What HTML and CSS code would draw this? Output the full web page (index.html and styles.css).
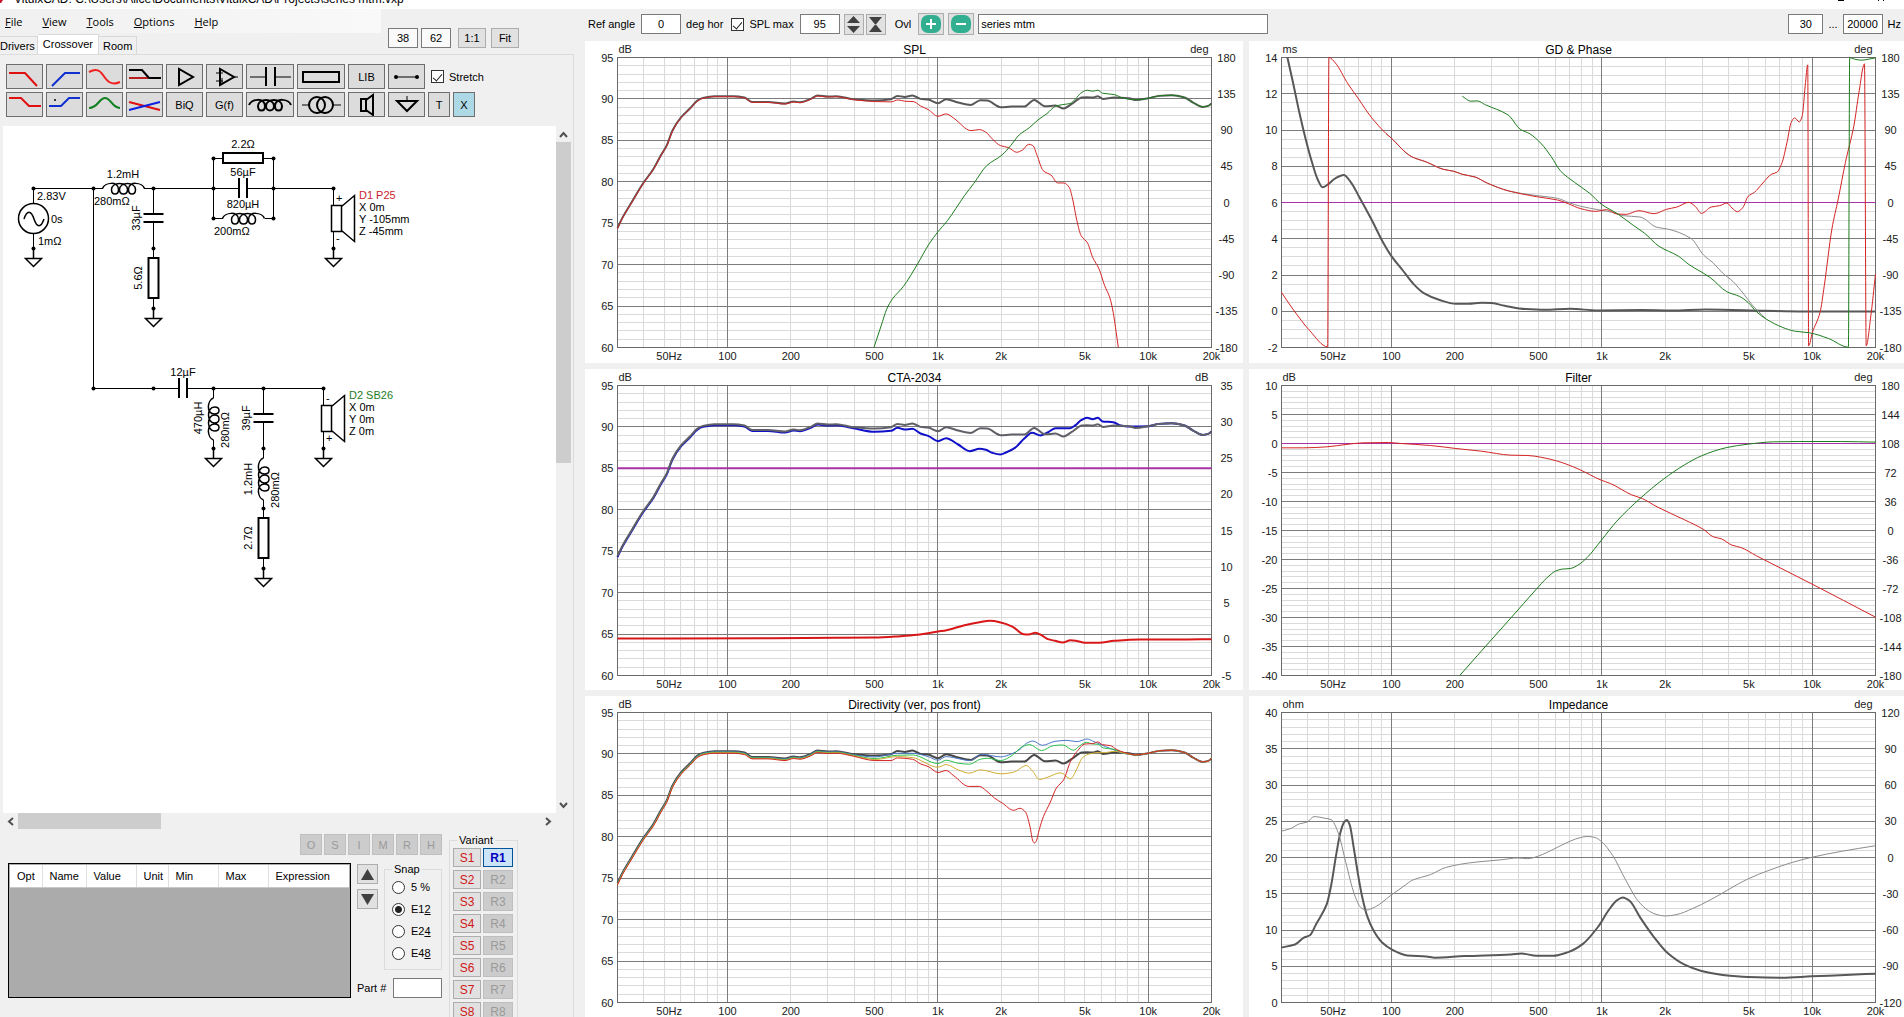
FILE: index.html
```html
<!DOCTYPE html>
<html lang="en">
<head>
  <meta charset="UTF-8" />
  <meta name="viewport" content="width=device-width, initial-scale=1.0" />
  <title>VituixCAD</title>
  <link rel="stylesheet" href="styles.css">
</head>
<body>
  <header class="titlebar">
    <svg class="app-icon" width="4" height="9"><path d="M0 0h3l-2 3H0z" fill="#c8102e"/></svg>
    <span class="title-text">VituixCAD: C:\Users\Alice\Documents\VituixCAD\Projects\series mtm.vxp</span>
    <svg class="window-marks" width="70" height="9"><path d="M4 .5h6M44.5 0v1M49.5 0v1" stroke="#000"/></svg>
  </header>

  <main class="app">
    <section class="left">
      <div class="head">
        <div class="head-nav">
          <nav class="menu">
            <a href="#"><u>F</u>ile</a>
            <a href="#"><u>V</u>iew</a>
            <a href="#"><u>T</u>ools</a>
            <a href="#"><u>O</u>ptions</a>
            <a href="#"><u>H</u>elp</a>
          </nav>
          <div class="tabs" role="tablist">
            <button class="tab first" role="tab">Drivers</button>
            <button class="tab active" role="tab" aria-selected="true">Crossover</button>
            <button class="tab" role="tab">Room</button>
          </div>
        </div>
        <div class="split">
          <input type="text" value="38" aria-label="Left width">
          <input type="text" value="62" aria-label="Right width">
          <div class="zoom">
            <button class="btn">1:1</button>
            <button class="btn">Fit</button>
          </div>
        </div>
      </div>

      <div class="page">
        <div class="toolbar">
          <div class="tool-row">
            <button class="tool" aria-label="Low pass"><svg width="35" height="23"><path d="M2 8h16l12 13" stroke="#e01010"/></svg></button>
            <button class="tool" aria-label="High pass"><svg width="35" height="23"><path d="M5 21L18 8h15" stroke="#1030d0"/></svg></button>
            <button class="tool" aria-label="All pass"><svg width="35" height="23"><path d="M2 7C8 4 12 4 16 10S24 21 33 17" stroke="#f02020"/></svg></button>
            <button class="tool" aria-label="Shelf"><svg width="35" height="23"><path d="M2 13h19" stroke="#b82020"/><path d="M2 5h13l7 8h12" stroke="#000"/></svg></button>
            <button class="tool" aria-label="Buffer"><svg width="35" height="23"><path d="M12 4v16l14-8z" stroke="#000"/></svg></button>
            <button class="tool" aria-label="Op amp"><svg width="35" height="23"><path d="M13 4v16l14-8z" stroke="#000"/><path d="M9 8h7M9 16h7M15 13v6M27 12h4" stroke="#000" stroke-width="1"/></svg></button>
            <button class="tool wide" aria-label="Capacitor"><svg width="46" height="23"><path d="M3 12h17M28 12h16" stroke="#000" stroke-width="1"/><path d="M19 2v19M28 2v19" stroke="#000"/></svg></button>
            <button class="tool wide" aria-label="Resistor"><svg width="46" height="23"><path d="M5 7h36v10H5z" stroke="#000"/></svg></button>
            <button class="tool">LIB</button>
            <button class="tool" aria-label="Wire"><svg width="35" height="23"><path d="M7 12h20" stroke="#000" stroke-width="1"/><circle cx="7" cy="12" r="2"/><circle cx="28" cy="12" r="2"/></svg></button>
            <label class="check stretch"><input type="checkbox" checked>Stretch</label>
          </div>
          <div class="tool-row">
            <button class="tool" aria-label="Low shelf"><svg width="35" height="23"><path d="M2 5h12l8 8h12" stroke="#e01010"/></svg></button>
            <button class="tool" aria-label="High shelf"><svg width="35" height="23"><path d="M2 13h12l8-8h11" stroke="#1030d0"/><circle cx="8" cy="7" r="1"/></svg></button>
            <button class="tool" aria-label="Peak"><svg width="35" height="23"><path d="M2 15C11 15 12 5 18 5S25 15 33 15" stroke="#108020"/></svg></button>
            <button class="tool" aria-label="Crossing"><svg width="35" height="23"><path d="M2 9l31 8" stroke="#e01010"/><path d="M2 17l31-8" stroke="#1020e0"/></svg></button>
            <button class="tool">BiQ</button>
            <button class="tool">G(f)</button>
            <button class="tool wide" aria-label="Inductor"><svg width="46" height="23"><use href="#coil" x="2" y="12"/></svg></button>
            <button class="tool wide" aria-label="Transformer"><svg width="46" height="23"><circle class="ring" cx="19" cy="12" r="8"/><circle class="ring" cx="27" cy="12" r="8"/><path d="M4 12h7M35 12h8" stroke="#000" stroke-width="1"/></svg></button>
            <button class="tool" aria-label="Driver"><svg width="35" height="23"><path d="M12 6h5v12h-5zM17 7l7-5v20l-7-5" stroke="#000"/></svg></button>
            <button class="tool" aria-label="Ground"><svg width="35" height="23"><path d="M18 3v5" stroke="#000" stroke-width="1"/><path d="M8 8h20l-10 10z" stroke="#000"/></svg></button>
            <button class="tool narrow">T</button>
            <button class="tool narrow on">X</button>
          </div>
        </div>

        <div class="canvas-box">
          <svg class="canvas">
            <defs>
              <path id="coil" d="M0 0C2-6 16-8 16 1C16 7 9 7 9 1C9-7 25-7 25 1C25 7 17 7 17 1C17-7 33-7 33 1C33 7 26 7 26 1C26-8 40-6 42 0"/>
              <path id="ground" d="M0 0v10M-8 10H8L0 18z"/>
              <g id="capacitor"><path d="M-4-10V10M4-10V10" stroke-width="2"/></g>
              <path id="resistor" d="M-20-5h40v10h-40z" stroke-width="2"/>
              <path id="speaker" d="M-2-13h10v26H-2zM8-12l13-11v46L8 12"/>
            </defs>
            <!-- shift the drawing grid so the sheet starts at its own corner -->
            <g transform="translate(-3 -126)">
              <g class="wires">
                <path d="M33.500 188.500H103M144 188.500H239M247 188.500H333.500V206M333.500 232V248.500M33.500 188.500V203M33.500 234V248.500"/>
                <path d="M93.500 188.500V388.500H179M187 388.500H323.500V406M323.500 432V448.500"/>
                <path d="M153.500 188.500V214M153.500 222V258M153.500 298V308.500"/>
                <path d="M213.500 218.500V158.500H223M263 158.500H273.500V218.500H265M213.500 218.500H223"/>
                <path d="M213.500 388.500V398M213.500 440V448.500M263.500 388.500V414M263.500 422V458M263.500 500V518M263.500 558V568.500"/>
              </g>
              <g class="parts">
                <circle cx="33.500" cy="218.500" r="15"/>
                <path d="M24 219c3-9 7-9 10 0s7 9 10 0"/>
                <use href="#coil" x="102.500" y="188.500"/>
                <use href="#coil" x="222.500" y="218.500"/>
                <use href="#coil" transform="translate(213.500 440) rotate(-90)"/>
                <use href="#coil" transform="translate(263.500 500) rotate(-90)"/>
                <use href="#capacitor" x="243" y="188"/>
                <use href="#capacitor" x="183" y="388"/>
                <use href="#capacitor" transform="translate(153.500 218) rotate(90)"/>
                <use href="#capacitor" transform="translate(263.500 418) rotate(90)"/>
                <use href="#resistor" x="243" y="158"/>
                <use href="#resistor" transform="translate(153.500 278) rotate(90)"/>
                <use href="#resistor" transform="translate(263.500 538) rotate(90)"/>
                <use href="#speaker" x="333.500" y="218.500"/>
                <use href="#speaker" x="323.500" y="418.500"/>
                <use href="#ground" x="33.500" y="248.500"/>
                <use href="#ground" x="333.500" y="248.500"/>
                <use href="#ground" x="153.500" y="308.500"/>
                <use href="#ground" x="213.500" y="448.500"/>
                <use href="#ground" x="323.500" y="448.500"/>
                <use href="#ground" x="263.500" y="568.500"/>
              </g>
              <g id="nodes"></g>
              <g class="labels">
                <text x="37" y="200">2.83V</text>
                <text x="51" y="223">0s</text>
                <text x="38" y="245">1mΩ</text>
                <text x="123" y="178" class="mid">1.2mH</text>
                <text x="94" y="205">280mΩ</text>
                <text x="243" y="148" class="mid">2.2Ω</text>
                <text x="243" y="176" class="mid">56µF</text>
                <text x="243" y="208" class="mid">820µH</text>
                <text x="214" y="235">200mΩ</text>
                <text x="183" y="376" class="mid">12µF</text>
                <text transform="translate(140 218) rotate(-90)" class="mid">33µF</text>
                <text transform="translate(142 278) rotate(-90)" class="mid">5.6Ω</text>
                <text transform="translate(202 418) rotate(-90)" class="mid">470µH</text>
                <text transform="translate(229 430) rotate(-90)" class="mid">280mΩ</text>
                <text transform="translate(250 418) rotate(-90)" class="mid">39µF</text>
                <text transform="translate(252 479) rotate(-90)" class="mid">1.2mH</text>
                <text transform="translate(279 490) rotate(-90)" class="mid">280mΩ</text>
                <text transform="translate(252 538) rotate(-90)" class="mid">2.7Ω</text>
                <text x="336" y="202">+</text>
                <text x="336" y="242">-</text>
                <text x="326" y="402">-</text>
                <text x="326" y="442">+</text>
                <text x="359" y="199" class="red">D1 P25</text>
                <text x="359" y="211">X 0m</text>
                <text x="359" y="223">Y -105mm</text>
                <text x="359" y="235">Z -45mm</text>
                <text x="349" y="399" class="green">D2 SB26</text>
                <text x="349" y="411">X 0m</text>
                <text x="349" y="423">Y 0m</text>
                <text x="349" y="435">Z 0m</text>
              </g>
            </g>
          </svg>
          <div class="scroll-v">
            <button aria-label="Scroll up"><svg width="9" height="7"><path d="M1 6l3.500-4L8 6"/></svg></button>
            <div class="thumb"></div>
            <button aria-label="Scroll down"><svg width="9" height="7"><path d="M1 1l3.500 4L8 1"/></svg></button>
          </div>
          <div class="scroll-h">
            <button aria-label="Scroll left"><svg width="7" height="9"><path d="M6 1L2 4.500 6 8"/></svg></button>
            <div class="thumb"></div>
            <button aria-label="Scroll right"><svg width="7" height="9"><path d="M1 1l4 3.500L1 8"/></svg></button>
          </div>
        </div>

        <div class="bottom">
          <div class="params">
            <div class="flags">
              <button disabled>O</button>
              <button disabled>S</button>
              <button disabled>I</button>
              <button disabled>M</button>
              <button disabled>R</button>
              <button disabled>H</button>
            </div>
            <div class="grid-box">
              <table class="grid">
                <thead>
                  <tr>
                    <th class="c-opt">Opt</th>
                    <th class="c-name">Name</th>
                    <th class="c-value">Value</th>
                    <th class="c-unit">Unit</th>
                    <th class="c-min">Min</th>
                    <th class="c-max">Max</th>
                    <th>Expression</th>
                  </tr>
                </thead>
              </table>
            </div>
            <div class="arrows">
              <button aria-label="Increase"><svg width="13" height="11"><path d="M6.500 0L13 11H0z"/></svg></button>
              <button aria-label="Decrease"><svg width="13" height="11"><path d="M6.500 11L13 0H0z"/></svg></button>
            </div>
            <fieldset class="snap">
              <legend>Snap</legend>
              <label><input type="radio" name="snap">5 %</label>
              <label><input type="radio" name="snap" checked><span>E1<u>2</u></span></label>
              <label><input type="radio" name="snap"><span>E2<u>4</u></span></label>
              <label><input type="radio" name="snap"><span>E4<u>8</u></span></label>
            </fieldset>
            <div class="part">
              <label for="part">Part #</label>
              <input type="text" id="part">
            </div>
          </div>
          <fieldset class="variant">
            <legend>Variant</legend>
            <button>S1</button><button class="recall">R1</button>
            <button>S2</button><button disabled>R2</button>
            <button>S3</button><button disabled>R3</button>
            <button>S4</button><button disabled>R4</button>
            <button>S5</button><button disabled>R5</button>
            <button>S6</button><button disabled>R6</button>
            <button>S7</button><button disabled>R7</button>
            <button>S8</button><button disabled>R8</button>
          </fieldset>
        </div>
      </div>
    </section>

    <section class="right">
      <div class="options">
        <label for="angle">Ref angle</label>
        <input type="text" id="angle" class="num" value="0">
        <span class="unit">deg hor</span>
        <label class="check"><input type="checkbox" checked>SPL max</label>
        <input type="text" class="num max" value="95" aria-label="SPL max">
        <button class="btn spin" aria-label="Move range"><svg width="15" height="19"><path d="M7.500 1L14 8H1zM7.500 18L14 11H1z"/></svg></button>
        <button class="btn spin" aria-label="Scale range"><svg width="15" height="19"><path d="M7.500 10L14 2H1zM7.500 9L14 17H1z"/></svg></button>
        <span class="ovl">Ovl</span>
        <button class="btn round" aria-label="Add overlay"><svg width="20" height="18"><rect width="20" height="18" rx="7" fill="#32ae91"/><path d="M10 4v10M5 9h10" stroke="#fff" stroke-width="2"/></svg></button>
        <button class="btn round" aria-label="Remove overlay"><svg width="20" height="18"><rect width="20" height="18" rx="7" fill="#32ae91"/><path d="M5 9h10" stroke="#fff" stroke-width="2"/></svg></button>
        <input type="text" class="ovl-name" value="series mtm" aria-label="Overlay name">
        <div class="range">
          <input type="text" class="low" value="30" aria-label="Lowest frequency">
          <span>...</span>
          <input type="text" class="high" value="20000" aria-label="Highest frequency">
          <span>Hz</span>
        </div>
      </div>
      <div class="charts">
        <svg class="chart" id="spl"></svg>
        <svg class="chart" id="phase"></svg>
        <svg class="chart" id="cta"></svg>
        <svg class="chart" id="filter"></svg>
        <svg class="chart" id="directivity"></svg>
        <svg class="chart" id="impedance"></svg>
      </div>
    </section>
  </main>

  <script src="charts.js"></script>
</body>
</html>
```
FILE: styles.css
```css
* {
  box-sizing: border-box;
}
body {
  margin: 0;
  height: 100vh;
  display: flex;
  flex-direction: column;
  overflow: hidden;
  background: #f0f0f0;
  color: #000;
  font-family: "Liberation Sans", Arial, sans-serif;
  font-size: 11px;
}
button, input {
  font: inherit;
  margin: 0;
}
button {
  display: flex;
  align-items: center;
  justify-content: center;
  padding: 0;
  background: #e1e1e1;
  border: 1px solid #adadad;
  color: #000;
}
button:disabled {
  background: #cccccc;
  border-color: #bfbfbf;
  color: #9a9a9a;
}
input[type="text"] {
  height: 20px;
  padding: 0 2px;
  border: 1px solid #7a7a7a;
  background: #fff;
}
svg {
  display: block;
  fill: none;
}

/* title bar */
.titlebar {
  height: 9px;
  flex: none;
  display: flex;
  align-items: flex-end;
  background: #fff;
  overflow: hidden;
}
.title-text {
  margin-left: 10px;
  padding-bottom: 3px;
  font-size: 12px;
  line-height: 14px;
}
.window-marks {
  margin-left: auto;
}

.app {
  flex: 1;
  min-height: 0;
  display: flex;
}
.left {
  flex: 0 0 574px;
  display: flex;
  flex-direction: column;
}
.right {
  flex: 1;
  min-width: 0;
  display: flex;
  flex-direction: column;
  padding-left: 11px;
}

/* menu and tabs */
.head {
  height: 45px;
  display: flex;
}
.head-nav {
  width: 381px;
}
.menu {
  height: 24px;
  display: flex;
  align-items: center;
  gap: 20px;
  padding-left: 5px;
  background: linear-gradient(to right, #f0f0f0, #f9f9f9);
  font-family: "Open Sans", sans-serif;
  font-size: 11px;
}
.menu a {
  color: #000;
  text-decoration: none;
}
.tabs {
  height: 22px;
  display: flex;
  align-items: flex-end;
}
.tab {
  height: 19px;
  padding: 0 4px;
  background: #f0f0f0;
  border: 1px solid #d9d9d9;
  border-left: none;
}
.tab.first {
  padding: 0 2px 0 0;
}
.tab.active {
  height: 21px;
  padding: 0 5px 2px;
  background: #fff;
  border-bottom: none;
}
.split {
  display: flex;
  align-items: flex-start;
  padding: 19px 0 0 7px;
  gap: 3px;
}
.split input {
  width: 30px;
  text-align: center;
  background: #fafafa;
}
.zoom {
  display: flex;
  gap: 5px;
  margin-left: 4px;
}
.zoom .btn {
  width: 28px;
  height: 20px;
}

/* tab page */
.page {
  flex: 1;
  min-height: 0;
  display: flex;
  flex-direction: column;
  border-top: 1px solid #dcdcdc;
  border-right: 1px solid #dcdcdc;
}
.toolbar {
  display: flex;
  flex-direction: column;
  gap: 3px;
  padding: 9px 6px;
}
.tool-row {
  display: flex;
  gap: 3px;
}
.tool {
  width: 37px;
  height: 25px;
  background: #dcdcdc;
  border-color: #6e6e6e;
}
.tool.wide {
  width: 48px;
}
.tool.narrow {
  width: 22px;
}
.tool.on {
  background: #add8e6;
}
.tool svg {
  stroke-width: 2;
}
.tool circle {
  fill: #000;
}
.tool use {
  stroke: #000;
}
.tool .ring {
  fill: none;
  stroke: #000;
}
.check {
  display: flex;
  align-items: center;
  gap: 5px;
}
.stretch {
  margin-left: 3px;
}
input[type="checkbox"] {
  appearance: none;
  width: 13px;
  height: 13px;
  border: 1px solid #333;
  background: #fff;
  display: flex;
  align-items: center;
  justify-content: center;
}
input[type="checkbox"]:checked::after {
  content: "";
  width: 4px;
  height: 8px;
  border: solid #222;
  border-width: 0 1px 1px 0;
  transform: rotate(40deg);
}

/* schematic */
.canvas-box {
  flex: 1;
  min-height: 0;
  display: grid;
  grid-template-columns: 1fr 15px;
  grid-template-rows: 1fr 16px;
  padding: 0 2px 0 3px;
}
.canvas {
  width: 100%;
  height: 100%;
  background: #fff;
}
.wires path {
  stroke: #000;
}
.parts {
  stroke: #000;
  stroke-width: 1.5;
}
#nodes {
  fill: #000;
}
.labels {
  fill: #000;
}
.labels .mid, .chart .mid {
  text-anchor: middle;
}
.labels .red {
  fill: #c81e2d;
}
.labels .green {
  fill: #1e7b1e;
}
.scroll-v, .scroll-h {
  display: flex;
}
.scroll-v {
  flex-direction: column;
}
.scroll-v button, .scroll-h button {
  width: 15px;
  height: 16px;
  border: none;
  background: #f0f0f0;
}
.canvas-box button path {
  stroke: #505050;
  stroke-width: 2;
}
.thumb {
  background: #cdcdcd;
}
.scroll-v .thumb {
  height: 321px;
  margin-bottom: auto;
}
.scroll-h .thumb {
  width: 143px;
  margin-right: auto;
}

/* bottom controls */
.bottom {
  flex: 0 0 188px;
  display: flex;
  align-items: flex-start;
  gap: 7px;
  padding: 5px 0 0 8px;
  overflow: hidden;
}
.params {
  display: grid;
  grid-template-columns: 343px 21px 58px;
  column-gap: 6px;
}
.flags {
  grid-column: 1 / 4;
  display: flex;
  justify-content: flex-end;
  gap: 2px;
  padding-bottom: 8px;
}
.flags button {
  width: 22px;
  height: 21px;
}
.grid-box {
  grid-row: 2 / 4;
  height: 135px;
  border: 1px solid #000;
  padding: 1px;
  background: #ababab;
}
.grid {
  width: 100%;
  table-layout: fixed;
  border-collapse: collapse;
}
.grid th {
  height: 22px;
  padding: 0 0 0 7px;
  background: #fff;
  border-right: 1px solid #e0e0e0;
  border-bottom: 1px solid #c8c8c8;
  font-weight: normal;
  text-align: left;
  white-space: nowrap;
}
.grid th:last-child {
  border-right: none;
}
.c-opt {
  width: 32px;
}
.c-name {
  width: 44px;
}
.c-value, .c-min, .c-max {
  width: 50px;
}
.c-unit {
  width: 32px;
}
.arrows {
  display: flex;
  flex-direction: column;
  gap: 5px;
  padding-top: 1px;
}
.arrows button {
  width: 21px;
  height: 20px;
}
.arrows path, .spin path {
  fill: #404040;
}
fieldset {
  margin: 0;
  border: 1px solid #dcdcdc;
}
legend {
  padding: 0 2px;
  line-height: 13px;
}
.snap {
  height: 107px;
  padding: 0 0 0 7px;
}
.snap label {
  height: 22px;
  display: flex;
  align-items: center;
  gap: 6px;
}
input[type="radio"] {
  appearance: none;
  width: 13px;
  height: 13px;
  border: 1px solid #333;
  border-radius: 50%;
  background: #fff;
}
input[type="radio"]:checked {
  background: radial-gradient(#222 0 3px, #fff 4px);
}
.part {
  grid-column: 2 / 4;
  display: flex;
  align-items: center;
  justify-content: space-between;
  padding-top: 7px;
}
.part input {
  width: 49px;
}
.variant {
  display: grid;
  grid-template-columns: 28px 30px;
  gap: 3px 2px;
  padding: 1px 4px 8px 3px;
}
.variant legend {
  margin-left: 4px;
}
.variant button {
  height: 19px;
  font-size: 12px;
  color: #d01818;
}
.variant button:disabled {
  color: #9a9a9a;
}
.variant .recall {
  background: #cce4f7;
  border-color: #005499;
  color: #0000c0;
  font-weight: bold;
}

/* options above the charts */
.options {
  height: 32px;
  display: flex;
  align-items: center;
  padding: 0 0 2px 3px;
}
.num {
  width: 40px;
  text-align: center;
}
#angle {
  margin: 0 5px 0 6px;
}
.options .check {
  margin-left: 8px;
}
.max {
  margin: 0 4px 0 6px;
}
.spin {
  width: 20px;
  height: 21px;
  margin-right: 2px;
}
.ovl {
  margin: 0 7px;
}
.round {
  width: 26px;
  height: 22px;
  margin-right: 4px;
}
.ovl-name {
  width: 290px;
}
.range {
  display: flex;
  align-items: center;
  gap: 5px;
  margin-left: auto;
  padding-right: 3px;
}
.range input {
  text-align: center;
}
.low {
  width: 35px;
}
.high {
  width: 40px;
}

/* charts */
.charts {
  flex: 1;
  min-height: 0;
  display: grid;
  grid-template-columns: 1fr 1fr;
  grid-template-rows: repeat(3, 1fr);
  gap: 6px;
  margin: 0 -3px -1px 0;
}
.chart {
  width: 100%;
  height: 100%;
  background: #fff;
}
.chart text {
  fill: #202020;
}
.chart .title {
  font-size: 12px;
  fill: #000;
}
.chart .end {
  text-anchor: end;
}
.chart line, .chart rect {
  shape-rendering: crispEdges;
}
.minor {
  stroke: #dadada;
}
.major {
  stroke: #7c7c7c;
}
.frame {
  stroke: #6a6a6a;
}
```
FILE: charts.js
```js
const svgNS = 'http://www.w3.org/2000/svg';

// connection dots of the schematic
const nodes = [
  [33.5, 188.5], [33.5, 248.5], [93.5, 188.5], [153.5, 188.5], [153.5, 248.5], [153.5, 308.5],
  [213.5, 158.5], [273.5, 158.5], [213.5, 188.5], [273.5, 188.5], [213.5, 218.5], [273.5, 218.5],
  [333.5, 188.5], [333.5, 248.5], [93.5, 388.5], [153.5, 388.5], [213.5, 388.5], [263.5, 388.5],
  [323.5, 388.5], [213.5, 448.5], [263.5, 448.5], [323.5, 448.5], [263.5, 508.5], [263.5, 568.5]
];
nodes.forEach(([cx, cy]) => add(document.getElementById('nodes'), 'circle', { cx, cy, r: 2 }));

function add(parent, name, attrs, text) {
  const el = document.createElementNS(svgNS, name);
  for (const key in attrs) el.setAttribute(key, attrs[key]);
  if (text !== undefined) el.textContent = text;
  parent.appendChild(el);
  return el;
}

// "x,y x,y ..." in the given box -> points from 0 to 1 on both axes
function trace(box, str) {
  return str.trim().split(/\s+/).map((p) => {
    const [x, y] = p.split(',').map(Number);
    return [(x - box[0]) / (box[2] - box[0]), (y - box[1]) / (box[3] - box[1])];
  });
}

const splBox = [88, 176, 1478, 1045];
const ctaBox = [88, 76, 1478, 946];
const dirBox = [88, 67, 1478, 942];
const phaseBox = [98, 176, 1501, 1045];
const filterBox = [98, 76, 1501, 946];
const impBox = [98, 67, 1501, 942];

const onAxis = trace(splBox, `88,687 100,655 120,612 148,553 172,510 190,468 203,440 217,394 237,355
  258,328 275,305 288,297 315,292 360,292 385,296 403,309 440,309 480,314 500,308 515,310 540,300
  556,290 580,293 600,292 640,301 690,305 728,301 743,291 760,294 778,290 797,300 815,302 838,313
  857,301 885,311 915,318 937,304 953,305 985,325 1010,323 1040,323 1063,303 1088,322 1113,320
  1132,329 1150,316 1175,296 1188,295 1200,296 1212,292 1224,300 1250,296 1285,298 1300,303
  1330,298 1355,291 1385,289 1415,296 1435,311 1458,324 1470,321 1478,314`);

const lowEnd = (to, dy) => onAxis.filter((p) => p[0] < to).map((p) => [p[0], p[1] + dy / 290]);
const highEnd = onAxis.filter((p) => p[0] > 0.87);

const woofer = lowEnd(0.43, 0.5).concat(trace(splBox, `690,308 728,309 745,303 760,307 780,308 797,321
  815,332 838,352 857,345 875,358 915,395 935,392 950,400 965,420 984,440 1003,446 1022,460
  1036,453 1050,436 1060,440 1070,470 1084,515 1103,529 1118,552 1133,552 1145,565 1153,600
  1163,665 1173,710 1188,732 1200,775 1215,810 1228,860 1240,895 1248,940 1255,1000 1260,1045`));
const tweeter = trace(splBox, `688,1045 705,980 718,930 731,900 757,862 790,795 817,735 838,698
  860,665 900,590 922,553 952,500 988,468 1008,440 1028,408 1052,386 1072,363 1093,344 1113,322
  1130,317 1147,314 1160,300 1172,283 1187,274 1200,277 1212,274 1223,283 1250,287 1270,297`).concat(highEnd);

const listening = lowEnd(0.43, 1).concat(trace(ctaBox, `690,215 728,212 743,203 760,208 778,206
  797,220 815,227 838,243 857,234 885,253 912,273 935,266 950,269 965,278 984,283 997,277 1018,263
  1040,235 1058,218 1078,226 1097,215 1113,204 1147,204 1160,195 1173,180 1187,173 1200,177
  1212,173 1223,184 1248,186 1265,196 1283,199`), highEnd.slice(1));
const directivityIndex = trace(ctaBox, `88,835 450,834 600,833 690,832 750,828 790,824 838,814
  858,810 900,795 935,786 960,782 985,787 1013,800 1038,822 1050,823 1066,818 1080,825 1095,837
  1112,842 1130,847 1148,840 1165,843 1185,848 1215,848 1250,842 1310,838 1400,838 1478,837`);

const angle1 = lowEnd(0.43, 0.5).concat(trace(dirBox, `690,201 743,190 778,190 815,200 838,211 857,200
  885,206 912,212 940,193 985,201 1010,192 1030,178 1045,160 1060,153 1082,166 1112,154 1140,151
  1163,155 1187,147 1200,153 1212,160 1230,170 1250,180 1270,190`), highEnd);
const angle2 = lowEnd(0.43, 1).concat(trace(dirBox, `690,206 743,196 778,195 838,221 857,211 885,220
  912,223 937,208 955,205 985,212 1012,196 1035,170 1053,164 1080,182 1108,167 1130,165 1155,181
  1170,167 1185,157 1200,162 1212,163 1225,174 1250,178 1270,188`), highEnd);
const angle3 = lowEnd(0.43, 1.5).concat(trace(dirBox, `690,209 743,200 778,203 838,232 857,224 885,240
  912,250 937,240 985,252 1015,247 1045,227 1060,245 1075,269 1095,262 1125,249 1148,267 1163,237
  1175,205 1190,193 1212,188 1230,188 1250,184 1275,190`), highEnd);
const angle4 = lowEnd(0.43, 2).concat(trace(dirBox, `690,212 728,212 743,204 778,208 797,222 815,230
  838,248 857,242 875,258 910,290 935,290 950,302 970,325 988,340 1015,362 1030,356 1043,368
  1053,410 1060,455 1064,461 1068,455 1075,420 1085,380 1100,340 1115,295 1132,270 1148,215
  1163,185 1182,162 1200,161 1212,156 1223,164 1242,167 1255,178 1275,188`), highEnd);

const groupDelay = trace(phaseBox, `112,176 125,250 140,340 155,420 170,490 183,540 195,565 208,556
  225,538 245,528 262,550 280,590 310,660 340,735 356,768 385,815 410,855 435,883 470,902 510,914
  540,914 570,911 595,912 625,920 675,930 720,932 780,929 845,934 950,933 1020,934 1100,931
  1240,935 1320,937 1501,937`);
const phaseStart = '345,404 355,415 405,473 440,489 480,511 505,517 525,526 555,534 585,553 635,576 ';
const wooferPhase = trace(phaseBox, `98,880 125,930 165,995 207,1043 210,176 225,192 255,255 280,300
  310,355 ${phaseStart} 700,593 750,603 775,614 805,629 840,637 866,632 890,645 912,646 942,635
  978,644 1007,631 1032,624 1060,610 1075,622 1090,643 1113,624 1133,620 1150,612 1162,627
  1175,638 1188,625 1200,592 1215,580 1235,552 1255,526 1268,520 1280,492 1292,430 1302,370
  1310,357 1321,369 1328,350 1335,260 1341,198 1343,1040 1352,1000 1370,940 1380,860 1398,690
  1413,600 1430,490 1450,380 1462,280 1475,195 1479,1040 1490,950 1501,825`);
const totalPhase = trace(phaseBox, `${phaseStart} 690,588 750,598 775,610 805,622 850,633 880,640
  905,650 945,654 985,685 1010,690 1065,718 1095,768 1118,792 1140,822 1165,848 1190,885 1210,918
  1235,950 1243,960`);
const tweeterPhase = trace(phaseBox, `525,292 545,307 560,306 580,318 633,348 662,391 685,405
  712,435 735,473 757,516 790,550 825,582 855,617 890,643 930,680 955,702 990,742 1035,771
  1060,796 1110,835 1150,878 1180,892 1200,910 1220,938 1243,960 1282,985 1310,996 1345,1001
  1390,1018 1437,1044 1440,177 1455,182 1468,184 1485,181 1501,177`);

const lowPass = trace(filterBox, `98,263 150,263 205,260 250,253 290,248 350,247 380,250 450,256
  510,265 570,273 640,285 680,286 710,291 750,303 800,327 853,360 875,370 925,404 950,415 985,440
  1050,479 1095,508 1118,530 1137,536 1162,555 1183,562 1220,587 1350,671 1501,771`);
const highPass = trace(filterBox, `519,946 560,887 640,773 700,687 725,653 745,633 760,627 780,625
  798,615 820,592 853,541 890,483 945,415 1000,357 1050,314 1090,287 1150,262 1200,252 1260,245
  1320,244 1420,244 1501,246`);

const impedance = trace(impBox, `98,776 130,767 150,747 165,739 180,705 205,645 215,590 228,490
  237,430 245,400 252,391 259,405 268,470 278,550 288,620 300,680 315,724 335,760 360,783 395,800
  440,803 460,807 530,802 640,797 665,794 700,801 740,801 775,790 810,765 845,715 870,665 890,634
  904,625 920,635 945,685 975,740 1010,793 1050,828 1090,847 1140,859 1200,865 1280,867 1350,863
  1430,859 1501,855`);
const impedancePhase = trace(impBox, `98,425 120,417 140,403 158,398 175,381 200,386 215,390
  232,430 250,520 270,615 285,655 297,663 320,653 355,620 390,588 407,573 450,556 485,535 520,525
  560,518 620,511 655,506 680,508 705,500 740,480 780,455 805,444 820,441 838,444 855,458 880,498
  910,570 940,635 965,665 985,677 1005,681 1030,677 1070,658 1110,633 1200,569 1250,543 1300,521
  1350,504 1420,486 1501,469`);

const flat = (y) => [[0, y], [1, y]];
const gray = '#585858', thinGray = '#8c8c8c', red = '#d42424', green = '#1e7d1e', purple = '#a832a8';

const charts = [
  { id: 'spl', title: 'SPL', unit: 'dB', unit2: 'deg', left: [95, 60, 5], minor: 1, right: [180, -180, 45],
    series: [[onAxis, gray, 2], [woofer, red, 1], [tweeter, green, 1]] },
  { id: 'phase', title: 'GD & Phase', unit: 'ms', unit2: 'deg', left: [14, -2, 2], minor: 0.5, right: [180, -180, 45],
    series: [[flat(0.5), purple, 1], [groupDelay, gray, 2], [totalPhase, thinGray, 1], [wooferPhase, red, 1], [tweeterPhase, green, 1]] },
  { id: 'cta', title: 'CTA-2034', unit: 'dB', unit2: 'dB', left: [95, 60, 5], minor: 1, right: [35, -5, 5],
    series: [[flat(10 / 35), purple, 2], [listening, '#1010c8', 2], [onAxis, '#606068', 2], [directivityIndex, '#d81818', 2]] },
  { id: 'filter', title: 'Filter', unit: 'dB', unit2: 'deg', left: [10, -40, 5], minor: 1, right: [180, -180, 36],
    series: [[flat(0.2), purple, 1], [lowPass, red, 1], [highPass, green, 1]] },
  { id: 'directivity', title: 'Directivity (ver, pos front)', unit: 'dB', left: [95, 60, 5], minor: 1,
    series: [[onAxis, '#484848', 2], [angle1, '#4a78c8', 1], [angle2, '#2cc04c', 1], [angle3, '#d0ae30', 1], [angle4, red, 1]] },
  { id: 'impedance', title: 'Impedance', unit: 'ohm', unit2: 'deg', left: [40, 0, 5], minor: 1, right: [120, -120, 30],
    series: [[impedance, gray, 2], [impedancePhase, thinGray, 1]] }
];

const freqLabels = { 100: '100', 200: '200', 500: '500', 1000: '1k', 2000: '2k', 5000: '5k', 10000: '10k', 20000: '20k' };
const freqPos = (f) => Math.log(f / 30) / Math.log(20000 / 30);

// monotone cubic, so that the steps in the phase curves do not overshoot
function curve(pts) {
  const n = pts.length;
  const d = [], m = [];
  for (let i = 0; i < n - 1; i++) d.push((pts[i + 1][1] - pts[i][1]) / (pts[i + 1][0] - pts[i][0]));
  m[0] = d[0];
  m[n - 1] = d[n - 2];
  for (let i = 1; i < n - 1; i++) m[i] = d[i - 1] * d[i] <= 0 ? 0 : 2 * d[i - 1] * d[i] / (d[i - 1] + d[i]);
  let path = 'M' + pts[0].join(' ');
  for (let i = 0; i < n - 1; i++) {
    const [x0, y0] = pts[i], [x1, y1] = pts[i + 1], h = (x1 - x0) / 3;
    path += `C${x0 + h} ${y0 + m[i] * h} ${x1 - h} ${y1 - m[i + 1] * h} ${x1} ${y1}`;
  }
  return path;
}

function draw(c) {
  const svg = document.getElementById(c.id);
  svg.innerHTML = '';
  const x0 = 32.5, y0 = 16.5;
  const w = Math.round(svg.clientWidth) - 64;
  const h = Math.round(svg.clientHeight) - 32;
  const line = (x1, y1, x2, y2, cls) => add(svg, 'line', { x1, y1, x2, y2, class: cls });
  const px = (v) => Math.round(v) + 0.5;
  const [top, bottom, step] = c.left;

  for (let v = top - c.minor; v > bottom; v -= c.minor) {
    const y = px(y0 - 0.5 + (top - v) / (top - bottom) * h);
    if ((top - v) % step) line(x0, y, x0 + w, y, 'minor');
  }
  const decades = [];
  for (let dec = 10; dec <= 10000; dec *= 10) {
    for (let k = 1; k < 10; k++) {
      const f = dec * k;
      if (f <= 30 || f >= 20000) continue;
      const x = px(x0 - 0.5 + freqPos(f) * w);
      if (k === 1) decades.push(x);
      else line(x, y0, x, y0 + h, 'minor');
    }
  }
  for (let v = top - step; v > bottom; v -= step) {
    const y = px(y0 - 0.5 + (top - v) / (top - bottom) * h);
    line(x0, y, x0 + w, y, 'major');
  }
  decades.forEach((x) => line(x, y0, x, y0 + h, 'major'));
  add(svg, 'rect', { x: x0, y: y0, width: w, height: h, class: 'frame' });

  c.series.forEach(([pts, stroke, width]) => {
    const scaled = pts.map((p) => [x0 + p[0] * w, y0 + p[1] * h]);
    add(svg, 'path', { d: curve(scaled), stroke, 'stroke-width': width });
  });

  add(svg, 'text', { x: x0 + w / 2, y: 13, class: 'title mid' }, c.title);
  add(svg, 'text', { x: x0 + 1, y: 12 }, c.unit);
  if (c.unit2) add(svg, 'text', { x: x0 + w - 3, y: 12, class: 'end' }, c.unit2);
  for (let v = top; v >= bottom; v -= step) {
    add(svg, 'text', { x: x0 - 4, y: y0 + (top - v) / (top - bottom) * h + 4, class: 'end' }, v);
  }
  if (c.right) {
    const [hi, lo, st] = c.right;
    for (let v = hi; v >= lo; v -= st) {
      add(svg, 'text', { x: x0 + w + 15, y: y0 + (hi - v) / (hi - lo) * h + 4, class: 'mid' }, v);
    }
  }
  const base = y0 + h + 12;
  add(svg, 'text', { x: x0 + freqPos(50) * w + 5, y: base, class: 'mid' }, '50Hz');
  for (const f in freqLabels) {
    add(svg, 'text', { x: x0 + freqPos(f) * w, y: base, class: 'mid' }, freqLabels[f]);
  }
}

function drawAll() {
  charts.forEach(draw);
}
drawAll();
window.addEventListener('resize', drawAll);
```
